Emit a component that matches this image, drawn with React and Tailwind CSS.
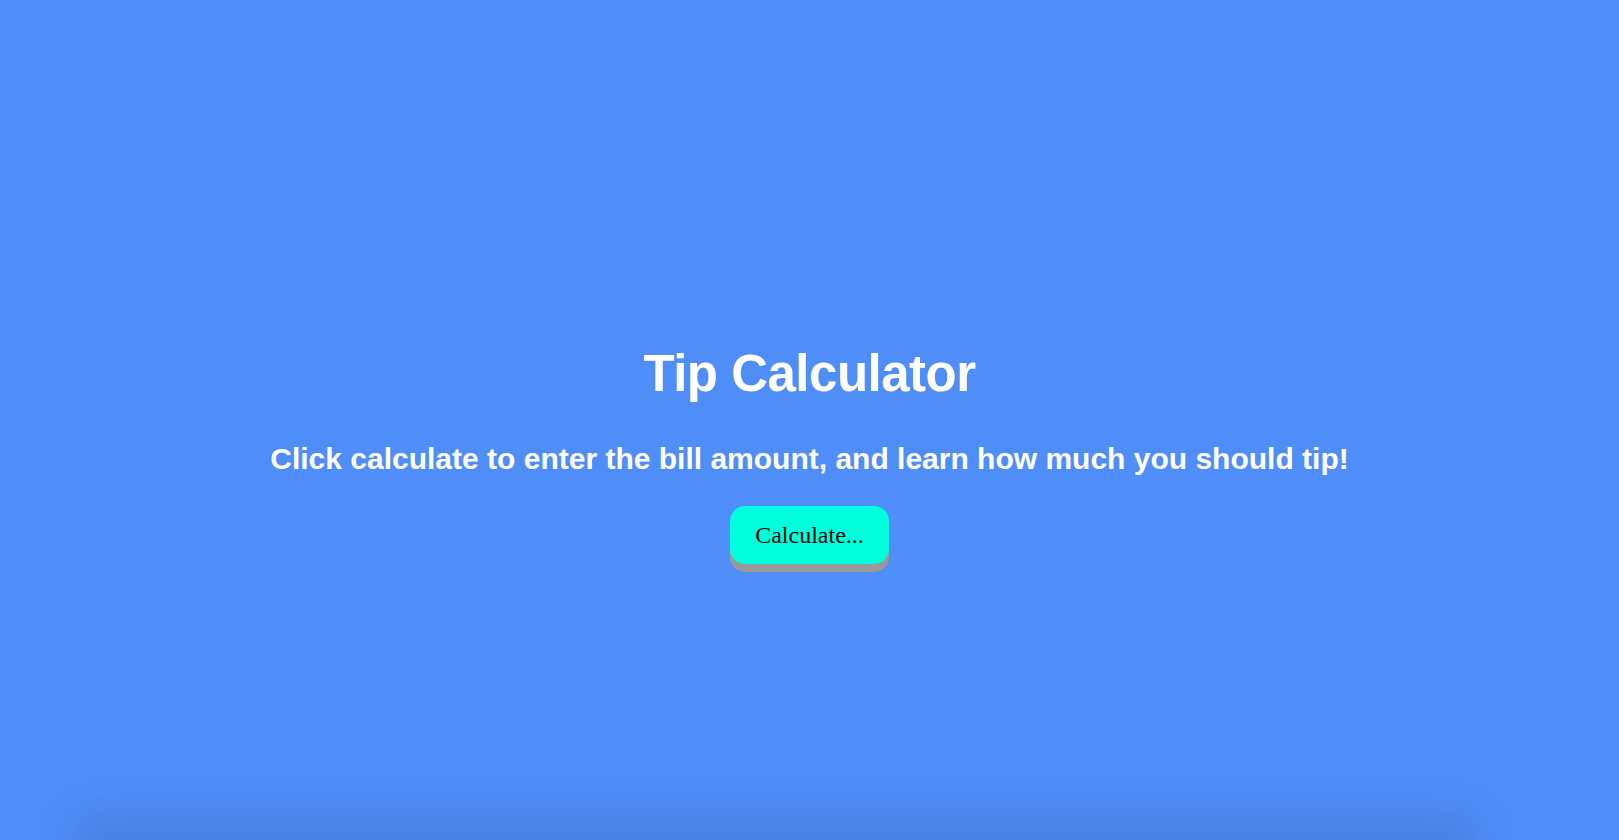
export default function App() {
    return (
        <div className="h-[840px] overflow-hidden bg-[#4f8ef9] flex flex-col items-center font-['Liberation_Sans',Arial,sans-serif]">
            {/* Heading block */}
            <div className="pt-[344px] flex flex-col items-center text-white font-bold">
                <h1 className="text-[51px] leading-[60px] tracking-[-0.5px]">Tip Calculator</h1>
                <p className="mt-[38px] text-[30px] leading-[34px]">
                    Click calculate to enter the bill amount, and learn how much you should tip!
                </p>
            </div>

            <button className="mt-[30px] px-[25px] h-[58px] rounded-[15px] bg-[#00ffdd] text-black text-[24px] font-['Liberation_Serif',serif] shadow-[0_8px_0_#999999]">
                Calculate...
            </button>

            {/* Shadow of the section below the fold */}
            <div className="mt-auto w-[1360px] -translate-x-[35px] h-0 shadow-[0_0_45px_22px_rgba(0,0,0,0.12)]" />
        </div>
    );
}
